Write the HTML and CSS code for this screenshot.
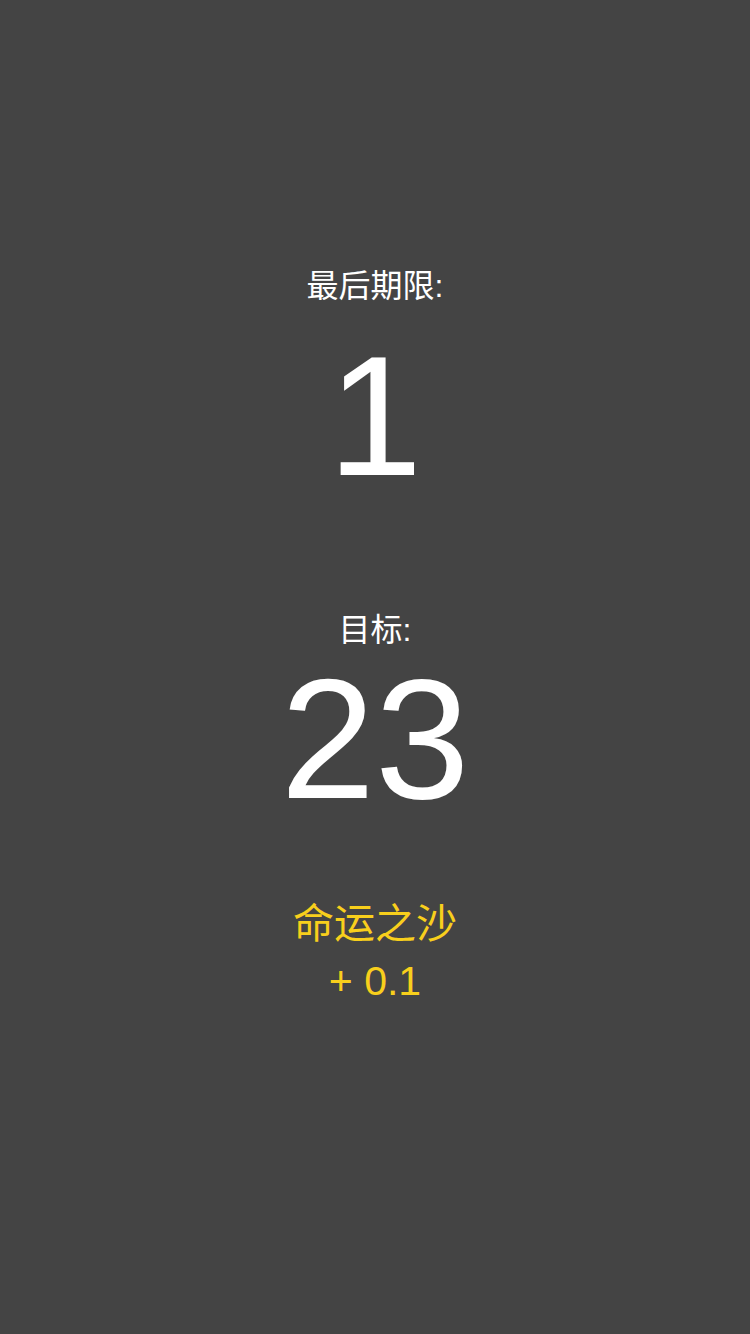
FILE: index.html
```html
<!DOCTYPE html>
<html lang="zh">
<head>
    <meta charset="UTF-8">
    <title>最后期限</title>
    <link rel="stylesheet" href="styles.css">
</head>
<body>
    <div class="screen">
        <div class="label">最后期限:</div>
        <div class="big deadline">1</div>
        <div class="label goal-label">目标:</div>
        <div class="big goal">23</div>
        <div class="sand">命运之沙</div>
        <div class="sand sand-value">+ 0.1</div>
    </div>
</body>
</html>
```

FILE: styles.css
```css
html, body { margin: 0; height: 100%; }
body { background: #444444; font-family: "Liberation Sans", Arial, "Noto Sans CJK SC", sans-serif; color: #fff; }
.screen { display: flex; flex-direction: column; align-items: center; padding-top: 270px; }
.label { font-size: 32px; line-height: 1; }
.big { font-size: 170px; line-height: 1; }
.deadline { margin-top: 29px; }
.goal-label { margin-top: 113px; }
.goal { margin-top: 8px; }
.sand { font-size: 41px; line-height: 1; color: #f8cf1c; margin-top: 80px; }
.sand-value { margin-top: 16px; }
```
